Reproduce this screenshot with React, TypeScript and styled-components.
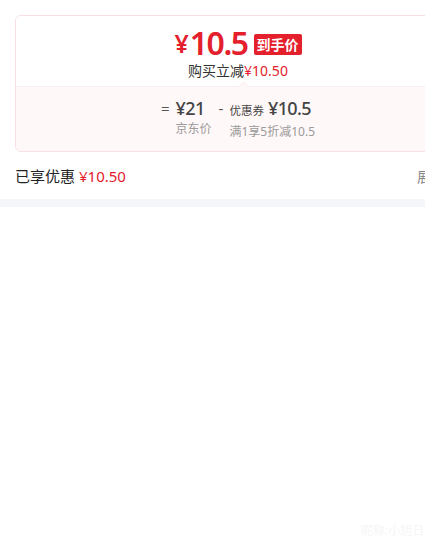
import React from "react";
import styled, { createGlobalStyle } from "styled-components";

const red = "#e3202b";

const GlobalStyle = createGlobalStyle`
  html, body {
    margin: 0;
    padding: 0;
    background: #ffffff;
    overflow: hidden;
  }
  body {
    font-family: "Noto Sans", "Noto Sans CJK SC", sans-serif;
    color: #333333;
  }
`;

const Page = styled.div`
  width: 476px;
  height: 545px;
  display: flex;
  flex-direction: column;
  position: relative;
`;

const Panel = styled.div`
  padding: 15px 15px 0;
`;

const Card = styled.div`
  border: 1px solid #f7dfe2;
  border-radius: 6px;
  overflow: hidden;
`;

const TopSection = styled.div`
  display: flex;
  flex-direction: column;
  align-items: center;
  padding: 8px 0 5px;
  background: #ffffff;
`;

const PriceRow = styled.div`
  display: flex;
  align-items: center;
  height: 37px;
  color: ${red};
`;

const Yen = styled.span<{ size: number }>`
  font-size: ${(p) => p.size}px;
  font-weight: 600;
  margin-right: 1px;
  align-self: flex-end;
  line-height: 1;
  padding-bottom: 5px;
`;

const BigNumber = styled.span`
  font-size: 32px;
  font-weight: 600;
  letter-spacing: -1.5px;
  line-height: 37px;
`;

const Badge = styled.span`
  margin-left: 6px;
  background: ${red};
  color: #ffffff;
  font-size: 14px;
  font-weight: 700;
  line-height: 21px;
  padding: 0 3px;
  border-radius: 2px;
  margin-top: 3px;
`;

const SubLine = styled.div`
  font-size: 14px;
  line-height: 20px;
  color: #333333;
`;

const RedText = styled.span`
  color: ${red};
`;

const BottomSection = styled.div`
  position: relative;
  background: #fff8f8;
  border-top: 1px solid #fbeef0;
  padding: 9px 0 10px;
  display: flex;
  justify-content: center;
  gap: 7px;
  &::before {
    content: "";
    position: absolute;
    top: -4px;
    left: 224px;
    width: 6px;
    height: 6px;
    background: #fff8f8;
    border-left: 1px solid #fbeef0;
    border-top: 1px solid #fbeef0;
    transform: rotate(45deg);
  }
`;

const Item = styled.div`
  display: flex;
  align-items: flex-start;
  gap: 6px;
`;

const Operator = styled.span`
  font-size: 15px;
  line-height: 24px;
  color: #555555;
`;

const Stack = styled.div`
  display: flex;
  flex-direction: column;
  align-items: flex-start;
`;

const AmountLine = styled.div`
  display: flex;
  align-items: baseline;
  line-height: 24px;
  color: #444444;
  white-space: nowrap;
`;

const Amount = styled.span`
  font-size: 18px;
  font-weight: 500;
  letter-spacing: -0.6px;
`;

const AmountLabel = styled.span`
  font-size: 11.5px;
  margin-right: 4px;
`;

const Caption = styled.div`
  font-size: 12px;
  line-height: 18px;
  color: #9a9a9a;
  white-space: nowrap;
`;

const SavedRow = styled.div`
  display: flex;
  justify-content: space-between;
  align-items: center;
  height: 47px;
  padding: 0 15px;
  font-size: 15px;
`;

const SavedLabel = styled.div`
  color: #222222;
  white-space: nowrap;
`;

const SavedAmount = styled.span`
  color: ${red};
  margin-left: 4px;
`;

const More = styled.div`
  display: flex;
  align-items: center;
  gap: 4px;
  color: #888888;
  font-size: 14px;
  white-space: nowrap;
`;

const Band = styled.div`
  height: 8px;
  background: #f5f6fa;
`;

const Watermark = styled.div`
  position: absolute;
  left: 361px;
  top: 521px;
  font-size: 12px;
  color: #f6f6f6;
`;

export default function App() {
  return (
    <>
      <GlobalStyle />
      <Page>
        <Panel>
          <Card>
            <TopSection>
              <PriceRow>
                <Yen size={25}>¥</Yen>
                <BigNumber>10.5</BigNumber>
                <Badge>到手价</Badge>
              </PriceRow>
              <SubLine>
                购买立减<RedText>¥10.50</RedText>
              </SubLine>
            </TopSection>
            <BottomSection>
              <Item>
                <Operator>=</Operator>
                <Stack>
                  <AmountLine>
                    <Amount>¥21</Amount>
                  </AmountLine>
                  <Caption>京东价</Caption>
                </Stack>
              </Item>
              <Item>
                <Operator>-</Operator>
                <Stack>
                  <AmountLine>
                    <AmountLabel>优惠券</AmountLabel>
                    <Amount>¥10.5</Amount>
                  </AmountLine>
                  <Caption>满1享5折减10.5</Caption>
                </Stack>
              </Item>
            </BottomSection>
          </Card>
        </Panel>
        <SavedRow>
          <SavedLabel>
            已享优惠<SavedAmount>¥10.50</SavedAmount>
          </SavedLabel>
          <More>
            展开
            <svg width="12" height="12" viewBox="0 0 12 12" fill="none">
              <path d="M3 4.5 6 7.5 9 4.5" stroke="#888" strokeWidth="1.2" />
            </svg>
          </More>
        </SavedRow>
        <Band />
        <Watermark>昵称:小旭日</Watermark>
      </Page>
    </>
  );
}
